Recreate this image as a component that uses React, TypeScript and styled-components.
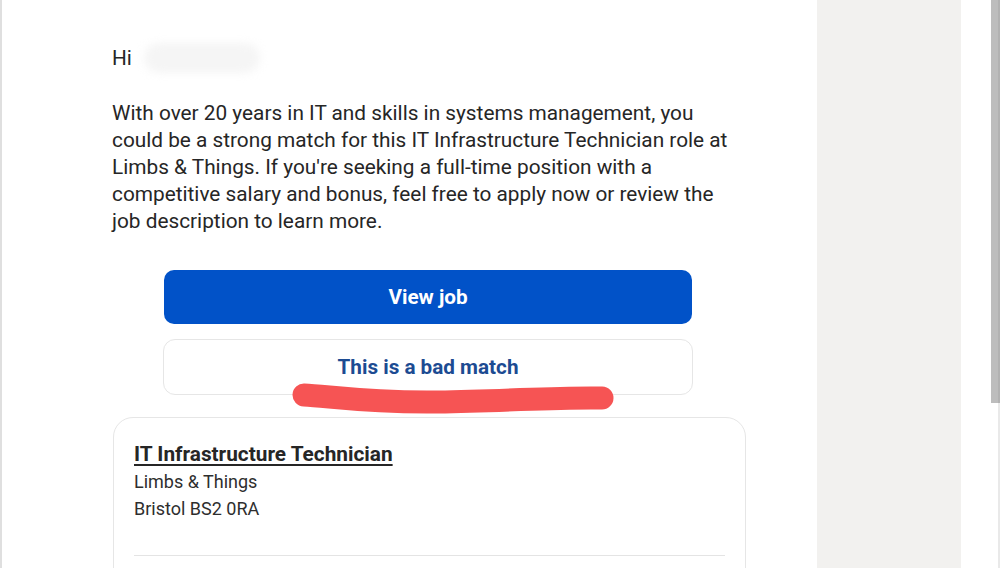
import React from "react";
import styled, { createGlobalStyle } from "styled-components";

const GlobalStyle = createGlobalStyle`
  html, body {
    margin: 0;
    padding: 0;
    background: #ffffff;
  }
  body {
    font-family: Roboto, "Liberation Sans", Arial, sans-serif;
    -webkit-font-smoothing: antialiased;
  }
`;

const Page = styled.div`
  display: grid;
  grid-template-columns: 2px 815px 144px 30px 9px;
  height: 568px;
  overflow: hidden;
  background: #ffffff;
`;

const EdgeLine = styled.div`
  background: #dfdfdf;
`;

const Main = styled.main`
  padding: 43px 0 0 110px;
  overflow: hidden;
`;

const Aside = styled.aside`
  background: #f2f1ef;
`;

const Gutter = styled.div`
  background: #ffffff;
`;

const Scrollbar = styled.div`
  display: flex;
  flex-direction: column;
`;

const Thumb = styled.div`
  height: 403px;
  background: #bdbdbd;
  border-right: 2px solid #b2b2b2;
`;

const Track = styled.div`
  flex: 1;
  border-right: 2px solid #e9e9e9;
`;

const Content = styled.div`
  width: 634px;
  color: #262626;
`;

const Greeting = styled.p`
  margin: 0 0 27px;
  font-size: 20.8px;
  line-height: 27px;
  display: flex;
  align-items: center;
`;

const BlurredName = styled.span`
  display: inline-block;
  width: 116px;
  height: 30px;
  margin-left: 12px;
  border-radius: 15px;
  background: #f5f5f5;
  filter: blur(4px);
`;

const Paragraph = styled.p`
  margin: 0;
  width: 620px;
  font-size: 20.8px;
  line-height: 27px;
`;

const Actions = styled.div`
  position: relative;
  width: 528px;
  margin: 35px 0 0 52px;
  display: flex;
  flex-direction: column;
  gap: 15px;
`;

const ActionButton = styled.button<{ $primary?: boolean }>`
  box-sizing: border-box;
  font-family: Roboto, "Liberation Sans", Arial, sans-serif;
  font-weight: 700;
  font-size: 20.7px;
  cursor: pointer;
  display: flex;
  align-items: center;
  justify-content: center;
  height: ${(p) => (p.$primary ? "54px" : "56px")};
  margin: ${(p) => (p.$primary ? "0" : "0 -1px")};
  border-radius: ${(p) => (p.$primary ? "10px" : "12px")};
  border: ${(p) => (p.$primary ? "none" : "1px solid #e6e6e6")};
  background: ${(p) => (p.$primary ? "#0152c8" : "#ffffff")};
  color: ${(p) => (p.$primary ? "#ffffff" : "#1c4b92")};
`;

const Scribble = styled.svg`
  position: absolute;
  left: 124px;
  top: 110px;
  pointer-events: none;
`;

const Card = styled.section`
  box-sizing: border-box;
  width: 633px;
  margin: 22px 0 0 1px;
  padding: 23px 20px 0;
  border: 1px solid #e6e6e6;
  border-radius: 20px;
  height: 200px;
`;

const JobTitle = styled.a`
  display: block;
  font-size: 20.8px;
  line-height: 27px;
  font-weight: 700;
  color: #262626;
  text-decoration: underline;
  text-underline-offset: 3px;
  text-decoration-thickness: 2px;
`;

const JobMeta = styled.div`
  font-size: 18px;
  line-height: 27px;
  color: #2e2e2e;
`;

const Divider = styled.hr`
  margin: 33px 0 0;
  border: none;
  border-top: 1px solid #e4e4e4;
`;

export default function App() {
  return (
    <>
      <GlobalStyle />
      <Page>
        <EdgeLine />
        <Main>
          <Content>
            <Greeting>
              Hi
              <BlurredName aria-hidden="true" />
            </Greeting>
            <Paragraph>
              With over 20 years in IT and skills in systems management, you could be a strong match for this IT
              Infrastructure Technician role at Limbs &amp; Things. If you're seeking a full-time position with a
              competitive salary and bonus, feel free to apply now or review the job description to learn more.
            </Paragraph>
            <Actions>
              <ActionButton $primary>View job</ActionButton>
              <ActionButton>This is a bad match</ActionButton>
              <Scribble width="332" height="34" viewBox="0 0 332 34">
                <path
                  d="M16 15 C 40 16, 80 23, 150 22 S 270 17, 314 18"
                  fill="none"
                  stroke="#f65454"
                  strokeWidth="23"
                  strokeLinecap="round"
                  strokeLinejoin="round"
                />
              </Scribble>
            </Actions>
            <Card>
              <JobTitle>IT Infrastructure Technician</JobTitle>
              <JobMeta>Limbs &amp; Things</JobMeta>
              <JobMeta>Bristol BS2 0RA</JobMeta>
              <Divider />
            </Card>
          </Content>
        </Main>
        <Aside />
        <Gutter />
        <Scrollbar>
          <Thumb />
          <Track />
        </Scrollbar>
      </Page>
    </>
  );
}
